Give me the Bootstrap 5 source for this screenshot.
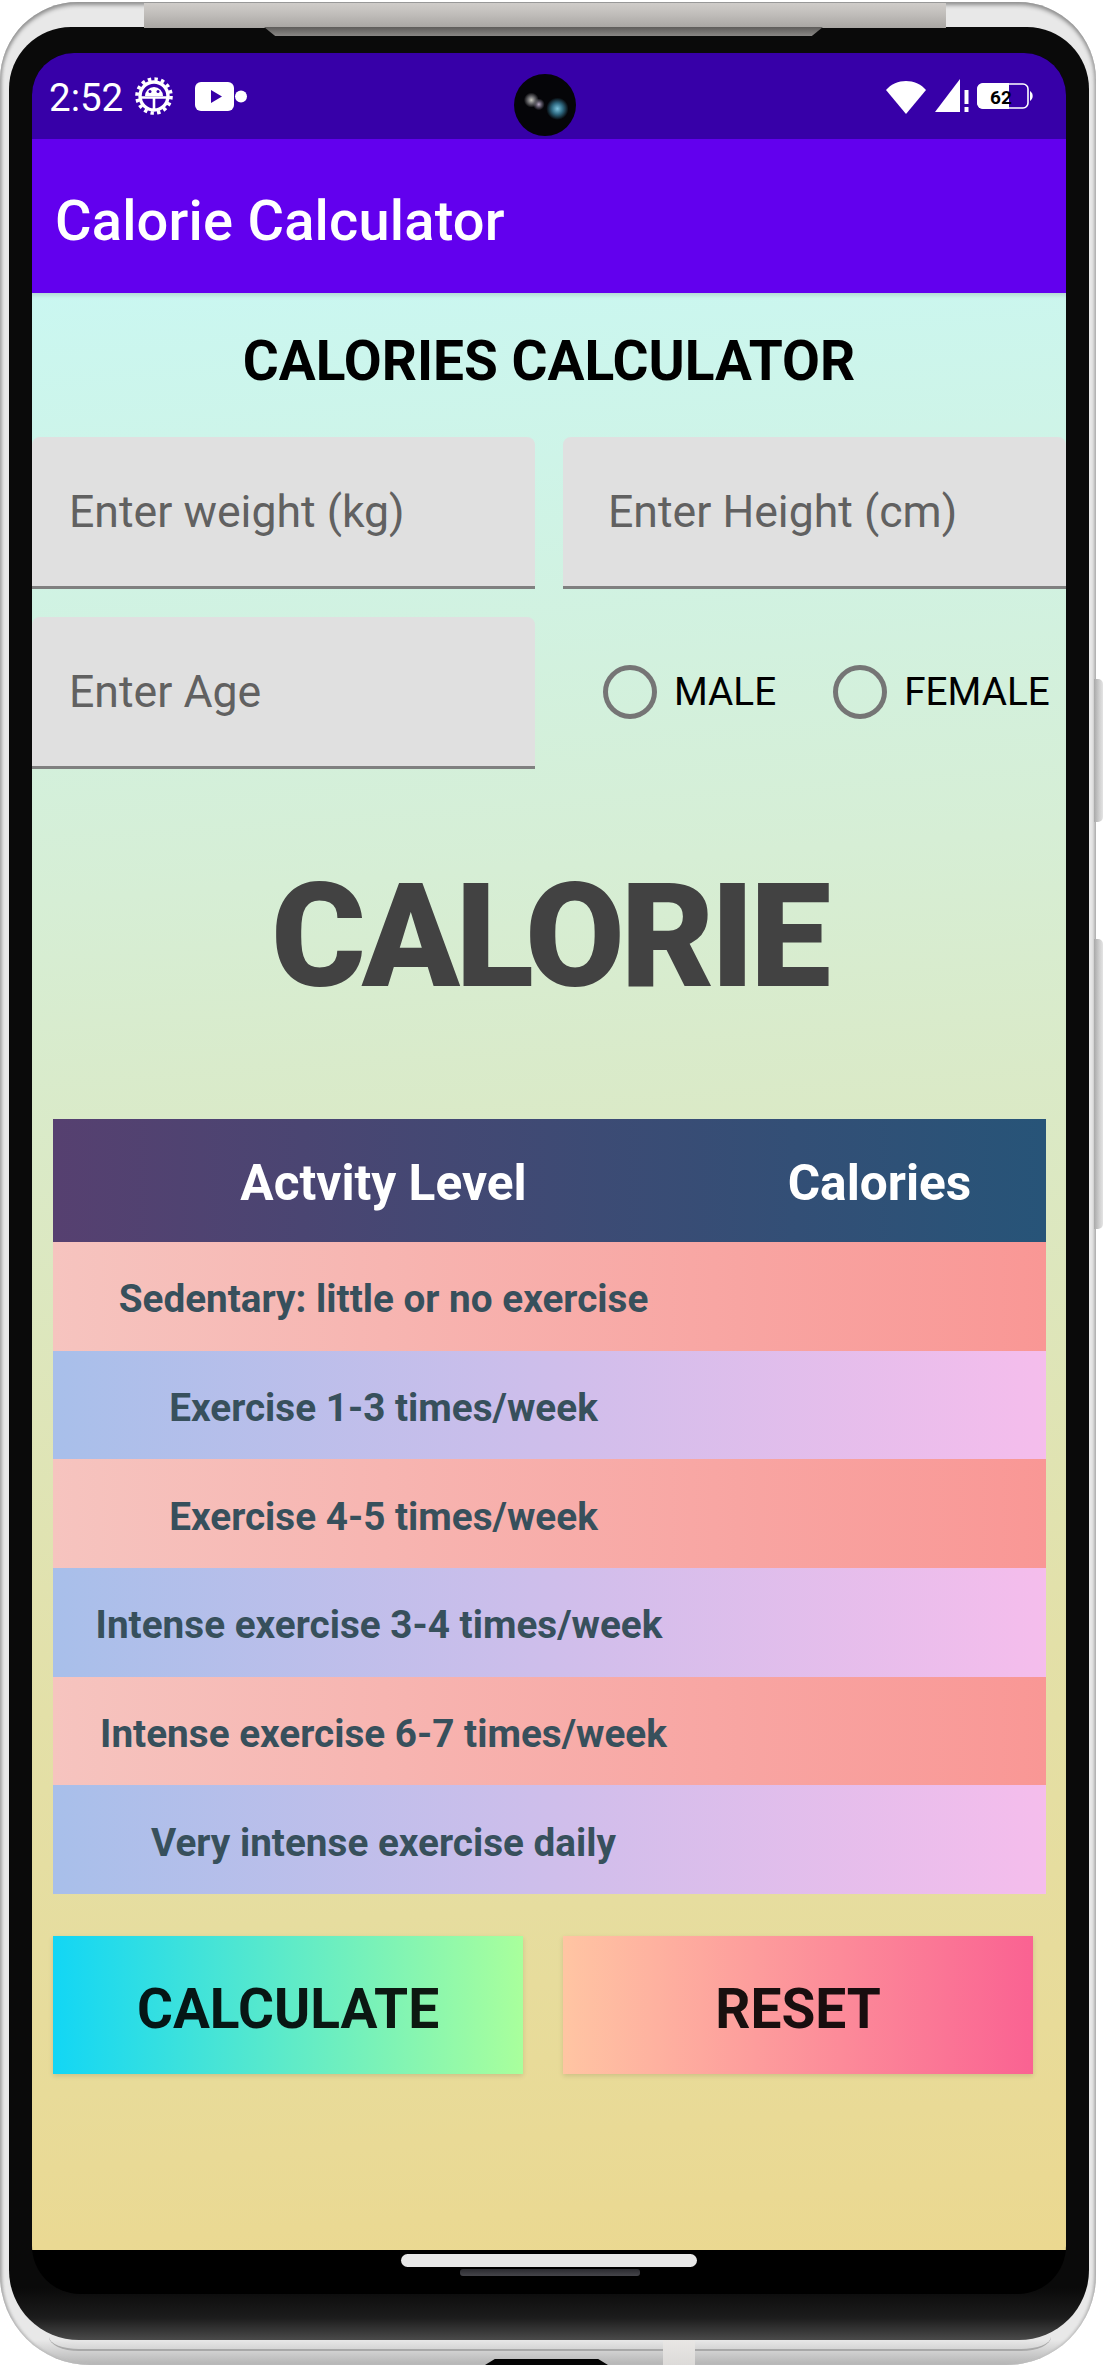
<!DOCTYPE html>
<html>
<head>
    <meta charset="utf-8">
    <link href="https://cdn.jsdelivr.net/npm/bootstrap@5.3.0/dist/css/bootstrap.min.css" rel="stylesheet">
    <style>
        html, body { margin: 0; background: #fff; }
        body { font-family: Roboto, "Liberation Sans", sans-serif; height: 2365px; overflow: hidden; padding-top: 2px; }

        /* phone frame */
        .phone-shell {
            position: relative;
            width: 1096px;
            height: 2363px;
            padding: 25px 7px 25px 9px;
            border-radius: 78px 78px 90px 90px;
            background: linear-gradient(#e8e8e8 0, #e8e8e8 2338px, #b4b4b4 100%);
            box-shadow: inset 0 3px 4px #8f8f8f, inset 2px 0 3px #bdbdbd, inset -2px 0 3px #c8c8c8;
        }
        .phone-bezel {
            height: 100%;
            padding: 26px 23px 46px 23px;
            border-radius: 62px 62px 70px 70px;
            background: linear-gradient(to top, #4a4a4a 0, #1c1c1c 22px, #0a0a0a 52px);
        }
        .phone-inner {
            height: 100%;
            background: #000;
            border-radius: 42px 42px 48px 48px;
            overflow: hidden;
        }
        .top-bar {
            position: absolute; left: 144px; top: 1px; width: 802px; height: 25px;
            background: linear-gradient(#cfccc9, #c4c1be 35%, #a9a6a3);
        }
        .top-lip {
            position: absolute; left: 264px; top: 25px; width: 559px; height: 9px;
            background: linear-gradient(#5e5c5a, #8a8886);
            clip-path: polygon(0 0, 100% 0, 98% 100%, 2% 100%);
        }
        .side-key {
            position: absolute; left: 1094px; width: 9px;
            background: linear-gradient(90deg, #a9a9a9, #cfcfcf 60%, #e4e4e4);
            border-radius: 0 5px 5px 0;
        }
        .key-one { top: 677px; height: 143px; }
        .key-two { top: 937px; height: 290px; }
        .chin-line {
            position: absolute; left: 49px; top: 2335px; width: 1002px; height: 14px;
            border-bottom: 2px solid #a8a8a8;
            border-radius: 0 0 30px 30px / 0 0 14px 14px;
        }
        .chin-strip {
            position: absolute; left: 663px; top: 2338px; width: 32px; height: 25px;
            background: linear-gradient(#e9e7e5, #dcdad8);
        }
        .chin-port {
            position: absolute; left: 485px; top: 2357px; width: 123px; height: 6px;
            background: #050505;
            clip-path: polygon(8% 0, 92% 0, 100% 100%, 0 100%);
        }

        /* status + app bar */
        .status-strip {
            position: relative;
            height: 86px;
            padding: 23px 33px 0 17px;
            background: #3700a8;
            color: #fff;
        }
        .status-time { font-size: 38.5px; line-height: 44px; width: 85px; }
        .video-icon { margin: 6px 0 0 21px; }
        .punch-cam {
            position: absolute; left: 482px; top: 21px; width: 62px; height: 62px;
            border-radius: 50%;
            background:
                radial-gradient(circle at 28% 42%, #c9c9c0 0, #6d6d70 6%, transparent 13%),
                radial-gradient(circle at 40% 49%, #b7aac0 0, #55505f 6%, transparent 12%),
                radial-gradient(circle at 70% 56%, #7cc3dc 0, #2f6a82 10%, transparent 20%),
                #050508;
        }
        .app-strip {
            height: 154px;
            padding: 9px 0 0 23px;
            background: #6200ee;
            color: #fff;
            font-size: 56px;
            font-weight: 500;
            letter-spacing: .2px;
        }

        /* screen */
        .app-screen {
            height: 1957px;
            background: linear-gradient(176deg, #caf7f1 0, #d6eed5 30%, #e3e0a8 70%, #ebd890 100%);
            box-shadow: inset 0 5px 5px -3px rgba(0, 0, 0, .14);
        }
        .page-heading { height: 136px; margin-bottom: 8px; font-size: 55px; font-weight: 700; color: #000; }
        .field-line { gap: 28px; margin-bottom: 28px; }
        .edit-box {
            width: 503px;
            height: 152px;
            padding-left: 37px;
            padding-top: 4px;
            padding-bottom: 3px;
            background: #e0e0e0;
            border-bottom: 3px solid #808080;
            border-radius: 8px 8px 0 0;
            color: #616161;
            font-size: 44.6px;
        }
        .edit-box.edit-right { padding-left: 45px; }
        .sex-group { padding-left: 40px; gap: 57px; padding-bottom: 2px; }
        .sex-group .form-check { padding: 0; margin: 0; gap: 17px; min-height: 0; }
        .sex-group .form-check-input {
            float: none; margin: 0;
            width: 54px; height: 54px;
            background-color: transparent;
            border: 5px solid #757575;
        }
        .sex-group .form-check-label { font-size: 38.7px; color: #000; line-height: 1; }
        .calorie-word {
            height: 350px;
            margin-top: -28px;
            padding-top: 5px;
            padding-bottom: 19px;
            font-size: 144px;
            font-weight: 900;
            letter-spacing: -4px;
            color: #424242;
        }
        .calorie-table { margin: 0 20px 0 21px; }
        .table-head {
            height: 123px;
            padding-top: 6px;
            background: linear-gradient(90deg, #564070, #275478);
            color: #fff;
            font-size: 49.6px;
            font-weight: 700;
        }
        .level-cell { width: 661px; }
        .cal-cell { width: 331px; }
        .level-row { height: 108.67px; padding-top: 6px; color: #37505c; font-size: 38.7px; font-weight: 700; }
        .level-row .shift-left { padding-right: 9px; }
        .row-warm { background: linear-gradient(90deg, #f6c4bf, #f99795); }
        .row-cool { background: linear-gradient(90deg, #a8bfea, #f5bdec); }
        .action-line { margin: 42px 0 0 21px; gap: 40px; }
        .action-btn {
            width: 470px;
            height: 138px;
            padding: 8px 0 0;
            border: 0;
            border-radius: 0;
            color: rgba(0, 0, 0, .9);
            font-size: 55px;
            font-weight: 700;
            box-shadow: 0 2px 5px rgba(0, 0, 0, .12);
        }
        .action-btn.go-btn, .action-btn.go-btn:hover { background: linear-gradient(90deg, #12d6f5, #a9ff9c); color: rgba(0, 0, 0, .9); }
        .action-btn.clear-btn, .action-btn.clear-btn:hover { background: linear-gradient(90deg, #ffc5a3, #fa6292); color: rgba(0, 0, 0, .9); }

        /* nav area */
        .nav-area { height: 44px; padding-top: 4px; }
        .home-pill { width: 296px; height: 13px; margin-left: 369px; border-radius: 7px; background: #e8e8e8; }
        .speaker-slot { width: 180px; height: 7px; margin: 2px 0 0 428px; border-radius: 3px; background: linear-gradient(#2b2b30, #45454a); }
    </style>
</head>
<body>
    <div class="phone-shell">
        <div class="top-bar"></div>
        <div class="top-lip"></div>
        <div class="side-key key-one"></div>
        <div class="side-key key-two"></div>
        <div class="phone-bezel">
            <div class="phone-inner">
                <div class="status-strip d-flex justify-content-between">
                    <div class="d-flex align-items-start">
                        <div class="status-time">2:52</div>
                        <svg width="40" height="40" viewBox="0 0 40 40" fill="none" stroke="#fff">
                            <circle cx="20" cy="20" r="14" stroke-width="3.4"/>
                            <circle cx="20" cy="20" r="17" stroke-width="3.6" stroke-dasharray="3.4 3.27"/>
                            <path d="M7 21.5h26M20 21.5V33" stroke-width="2.6"/>
                            <path d="M11 20a9 9 0 0 1 18 0z" fill="#fff" stroke="none"/>
                            <circle cx="16" cy="15.5" r="1.5" fill="#3700a8" stroke="none"/>
                            <circle cx="24" cy="15.5" r="1.5" fill="#3700a8" stroke="none"/>
                        </svg>
                        <svg class="video-icon" width="54" height="30" viewBox="0 0 54 30">
                            <rect x="0" y="0" width="39" height="29" rx="6" fill="#fff"/>
                            <path d="M16 8l11 6.5L16 21z" fill="#3700a8"/>
                            <circle cx="46" cy="14.5" r="6" fill="#fff"/>
                        </svg>
                    </div>
                    <div class="d-flex align-items-start">
                        <svg width="42" height="36" viewBox="0 0 42 36" style="margin-top:3px">
                            <path d="M1 11C11 -1 31 -1 41 11L21 35z" fill="#fff"/>
                        </svg>
                        <svg class="ms-2" width="34" height="36" viewBox="0 0 34 36" style="margin-top:2px">
                            <path d="M25 1V34H0z" fill="#fff"/>
                            <path d="M29.5 12h4v14h-4zM29.5 29h4v5h-4z" fill="#fff"/>
                        </svg>
                        <svg class="ms-2" width="56" height="26" viewBox="0 0 56 26" style="margin-top:7px">
                            <rect x="1" y="1" width="50" height="24" rx="5" fill="none" stroke="#fff" stroke-width="1.6"/>
                            <path d="M6 0H32V26H6a6 6 0 0 1-6-6V6a6 6 0 0 1 6-6z" fill="#fff"/>
                            <path d="M53 8a6 6 0 0 1 0 10z" fill="#fff"/>
                            <text x="24" y="20.5" text-anchor="middle" font-family="Roboto" font-weight="700" font-size="19" fill="#000">62</text>
                        </svg>
                    </div>
                    <div class="punch-cam"></div>
                </div>
                <div class="app-strip d-flex align-items-center">Calorie Calculator</div>

                <div class="app-screen">
                    <div class="page-heading d-flex align-items-center justify-content-center">CALORIES CALCULATOR</div>
                    <div class="field-line d-flex">
                        <div class="edit-box d-flex align-items-center">Enter weight (kg)</div>
                        <div class="edit-box edit-right d-flex align-items-center flex-grow-1">Enter Height (cm)</div>
                    </div>
                    <div class="field-line d-flex">
                        <div class="edit-box d-flex align-items-center">Enter Age</div>
                        <div class="sex-group d-flex align-items-center flex-grow-1">
                            <div class="form-check d-flex align-items-center">
                                <input class="form-check-input" type="radio" name="sex" id="male">
                                <label class="form-check-label" for="male">MALE</label>
                            </div>
                            <div class="form-check d-flex align-items-center">
                                <input class="form-check-input" type="radio" name="sex" id="female">
                                <label class="form-check-label" for="female">FEMALE</label>
                            </div>
                        </div>
                    </div>
                    <div class="calorie-word d-flex align-items-center justify-content-center">CALORIE</div>
                    <div class="calorie-table">
                        <div class="table-head d-flex align-items-center text-center">
                            <div class="level-cell">Actvity Level</div>
                            <div class="cal-cell">Calories</div>
                        </div>
                        <div class="level-row row-warm d-flex align-items-center text-center"><div class="level-cell">Sedentary: little or no exercise</div></div>
                        <div class="level-row row-cool d-flex align-items-center text-center"><div class="level-cell">Exercise 1-3 times/week</div></div>
                        <div class="level-row row-warm d-flex align-items-center text-center"><div class="level-cell">Exercise 4-5 times/week</div></div>
                        <div class="level-row row-cool d-flex align-items-center text-center"><div class="level-cell shift-left">Intense exercise 3-4 times/week</div></div>
                        <div class="level-row row-warm d-flex align-items-center text-center"><div class="level-cell">Intense exercise 6-7 times/week</div></div>
                        <div class="level-row row-cool d-flex align-items-center text-center"><div class="level-cell">Very intense exercise daily</div></div>
                    </div>
                    <div class="action-line d-flex">
                        <button type="button" class="btn action-btn go-btn">CALCULATE</button>
                        <button type="button" class="btn action-btn clear-btn">RESET</button>
                    </div>
                </div>

                <div class="nav-area">
                    <div class="home-pill"></div>
                    <div class="speaker-slot"></div>
                </div>
            </div>
        </div>
        <div class="chin-line"></div>
        <div class="chin-strip"></div>
        <div class="chin-port"></div>
    </div>

    <script src="https://cdn.jsdelivr.net/npm/bootstrap@5.3.0/dist/js/bootstrap.bundle.min.js"></script>
</body>
</html>
